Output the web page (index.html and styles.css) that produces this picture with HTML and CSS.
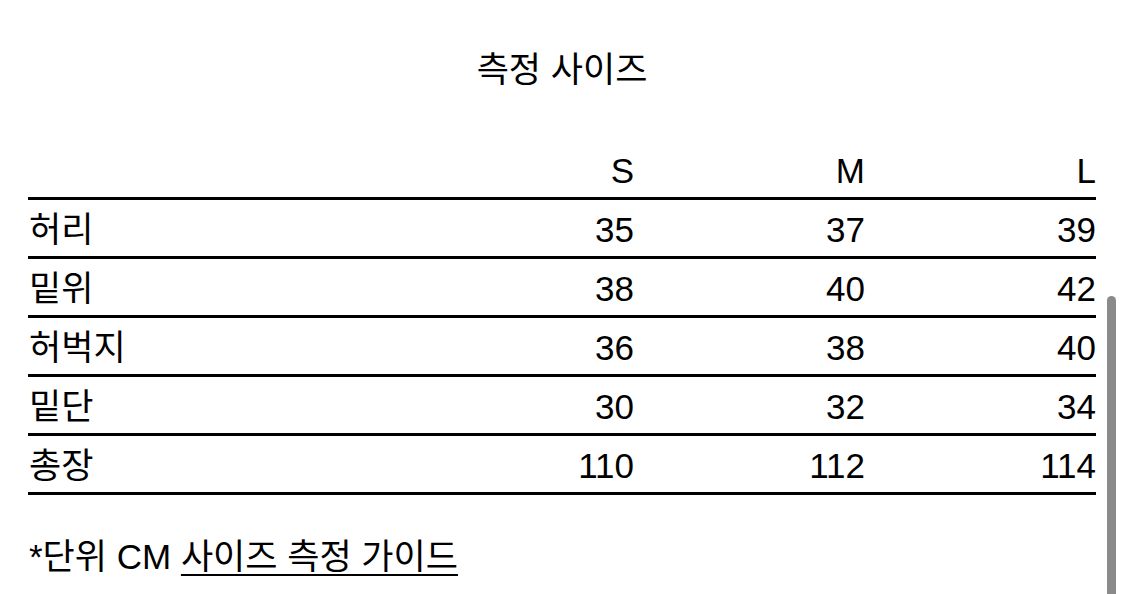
FILE: index.html
```html
<!DOCTYPE html>
<html lang="ko">
<head>
<meta charset="utf-8">
<title>측정 사이즈</title>
<link rel="stylesheet" href="styles.css">
</head>
<body>
<main class="page">
  <h1 class="title">측정 사이즈</h1>
  <table class="size-table">
    <thead>
      <tr><th class="label"></th><th>S</th><th>M</th><th>L</th></tr>
    </thead>
    <tbody>
      <tr><td class="label">허리</td><td>35</td><td>37</td><td>39</td></tr>
      <tr><td class="label">밑위</td><td>38</td><td>40</td><td>42</td></tr>
      <tr><td class="label">허벅지</td><td>36</td><td>38</td><td>40</td></tr>
      <tr><td class="label">밑단</td><td>30</td><td>32</td><td>34</td></tr>
      <tr><td class="label">총장</td><td>110</td><td>112</td><td>114</td></tr>
    </tbody>
  </table>
  <p class="note">*단위 CM <a class="guide" href="#">사이즈 측정 가이드</a></p>
</main>
<div class="scrollbar"></div>
</body>
</html>
```
FILE: styles.css
```css
html, body {
  margin: 0;
  padding: 0;
  background: #ffffff;
  overflow: hidden;
}
body {
  font-family: "Liberation Sans", "Noto Sans CJK KR", sans-serif;
  color: #000000;
  font-size: 35px;
}
.page {
  padding: 0 29px 0 28px;
}
.title {
  margin: 50px 0 0;
  font-size: 35px;
  font-weight: 400;
  line-height: 40px;
  text-align: center;
}
.size-table {
  margin-top: 49px;
  width: 100%;
  border-collapse: collapse;
  table-layout: fixed;
}
.size-table th,
.size-table td {
  height: 56px;
  padding: 0;
  font-weight: 400;
  font-size: 35px;
  line-height: 52px;
  text-align: right;
  border-bottom: 3px solid #000000;
  vertical-align: bottom;
}
.size-table th.label,
.size-table td.label {
  text-align: left;
  width: auto;
  padding-left: 1px;
}
.size-table th:not(.label),
.size-table td:not(.label) {
  width: 231px;
}
.size-table thead th {
  height: 58px;
}
.note {
  margin: 42px 0 0;
  padding-left: 1px;
  line-height: 40px;
  font-size: 35px;
}
.guide {
  color: #000000;
  text-decoration: underline;
  text-decoration-thickness: 2px;
  text-underline-offset: 5px;
}
.scrollbar {
  position: absolute;
  left: 1107px;
  top: 296px;
  width: 9px;
  height: 320px;
  background: #8a8a8a;
  border-radius: 5px;
}
```
